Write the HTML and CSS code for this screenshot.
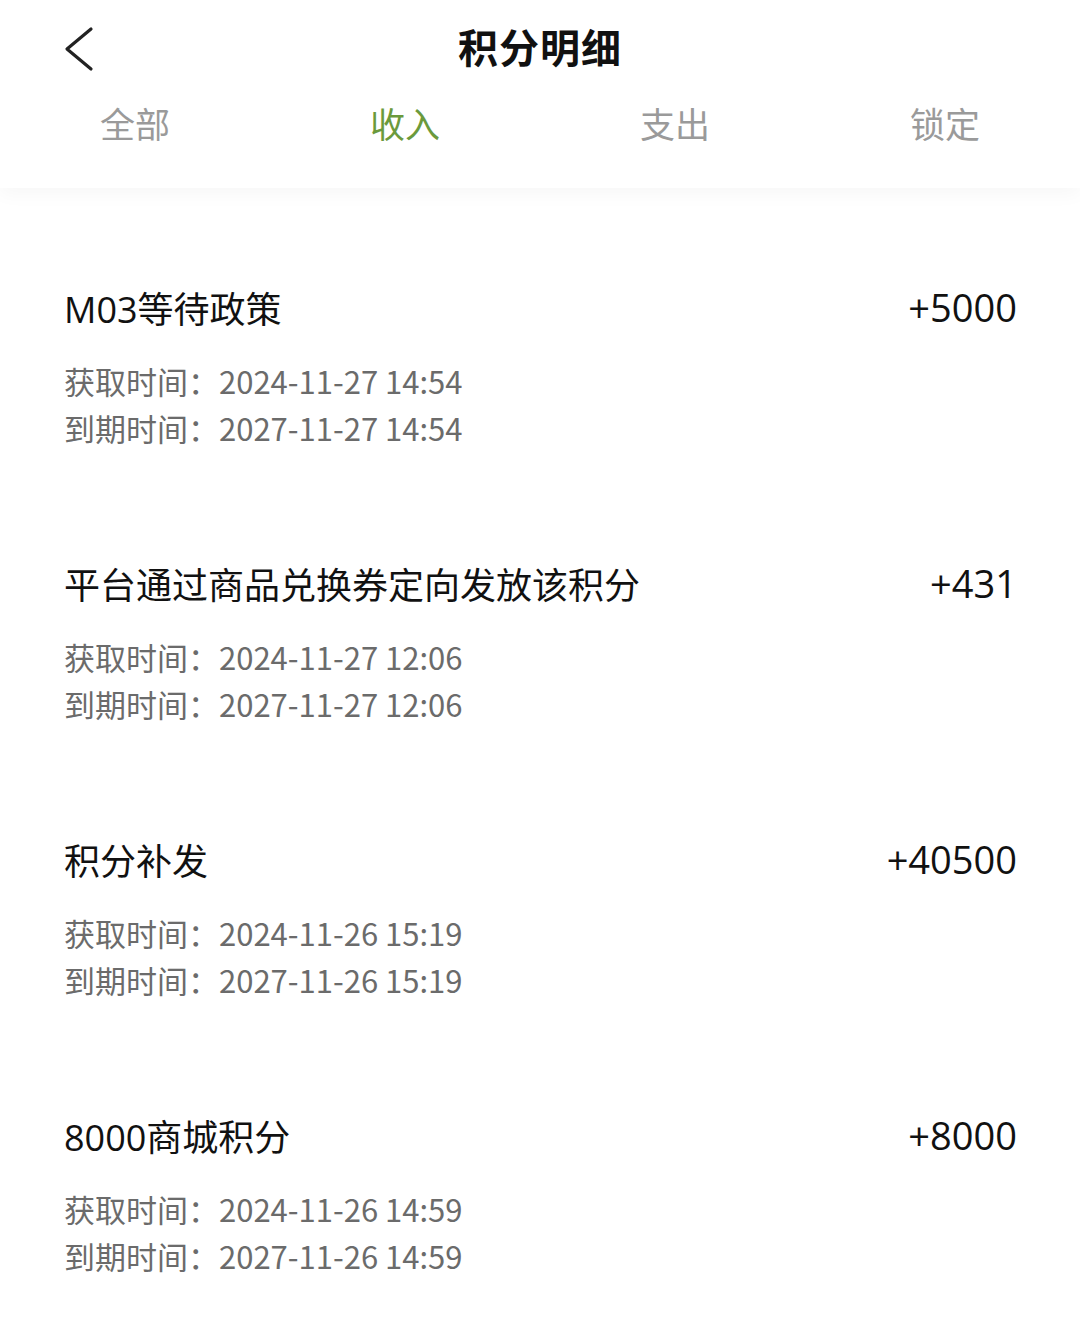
FILE: index.html
```html
<!DOCTYPE html>
<html lang="zh-CN">
<head>
    <meta charset="UTF-8">
    <meta name="viewport" content="width=device-width, initial-scale=1.0">
    <title>积分明细</title>
    <link rel="stylesheet" href="styles.css">
</head>
<body>
    <header class="top">
        <div class="title-row">
            <span class="back">
                <svg width="32" height="48" viewBox="0 0 32 48"><path d="M27 4 L3 24 L27 44" fill="none" stroke="#222" stroke-width="3.2" stroke-linecap="round" stroke-linejoin="round"/></svg>
            </span>
            <h1>积分明细</h1>
        </div>
        <nav class="tabs">
            <span class="tab">全部</span>
            <span class="tab active">收入</span>
            <span class="tab">支出</span>
            <span class="tab">锁定</span>
        </nav>
    </header>

    <div class="list">
        <div class="item">
            <div class="row">
                <span class="name">M03等待政策</span>
                <span class="amount">+5000</span>
            </div>
            <div class="meta">获取时间：2024-11-27 14:54</div>
            <div class="meta">到期时间：2027-11-27 14:54</div>
        </div>
        <div class="item">
            <div class="row">
                <span class="name">平台通过商品兑换券定向发放该积分</span>
                <span class="amount">+431</span>
            </div>
            <div class="meta">获取时间：2024-11-27 12:06</div>
            <div class="meta">到期时间：2027-11-27 12:06</div>
        </div>
        <div class="item">
            <div class="row">
                <span class="name">积分补发</span>
                <span class="amount">+40500</span>
            </div>
            <div class="meta">获取时间：2024-11-26 15:19</div>
            <div class="meta">到期时间：2027-11-26 15:19</div>
        </div>
        <div class="item">
            <div class="row">
                <span class="name">8000商城积分</span>
                <span class="amount">+8000</span>
            </div>
            <div class="meta">获取时间：2024-11-26 14:59</div>
            <div class="meta">到期时间：2027-11-26 14:59</div>
        </div>
    </div>
</body>
</html>
```

FILE: styles.css
```css
body {
    font-family: "Noto Sans CJK SC", "Noto Sans", sans-serif;
    margin: 0;
    padding: 0;
    background: #fff;
    color: #111;
}
.top {
    height: 188px;
    background: #fff;
    box-shadow: 0 6px 18px rgba(0, 0, 0, 0.035);
    position: relative;
    z-index: 1;
}
.title-row {
    height: 92px;
    display: flex;
    align-items: center;
    justify-content: center;
    position: relative;
}
.back {
    position: absolute;
    left: 64px;
    top: 25px;
    display: flex;
}
h1 {
    margin: 0;
    font-size: 40px;
    font-weight: 700;
    letter-spacing: 1px;
    color: #111;
}
.tabs {
    display: grid;
    grid-template-columns: repeat(4, 1fr);
    height: 60px;
    align-items: center;
}
.tab {
    text-align: center;
    font-size: 35px;
    color: #9a9a9a;
}
.tab.active {
    color: #6b9a3c;
}
.list {
    padding: 94px 63px 0 64px;
    display: flex;
    flex-direction: column;
    gap: 107px;
}
.row {
    display: flex;
    justify-content: space-between;
    align-items: center;
    height: 50px;
    margin-bottom: 25px;
}
.name {
    font-size: 36px;
    color: #111;
    font-family: "Open Sans", "Noto Sans CJK SC", sans-serif;
}
.amount {
    font-size: 38px;
    color: #111;
    font-family: "Open Sans", "Noto Sans", sans-serif;
}
.meta {
    font-size: 31px;
    line-height: 47px;
    color: #6b6b6b;
}
```
